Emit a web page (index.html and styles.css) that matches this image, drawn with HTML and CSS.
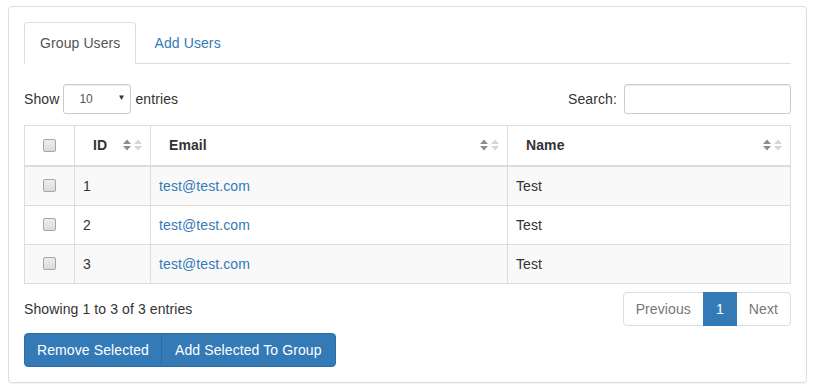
FILE: index.html
```html
<!DOCTYPE html>
<html>
<head>
<meta charset="utf-8">
<link rel="stylesheet" href="styles.css">
</head>
<body>
<div class="panel">
  <ul class="tabs">
    <li class="tab active">Group Users</li>
    <li class="tab">Add Users</li>
  </ul>

  <div class="controls">
    <div class="length">
      <span>Show</span>
      <span class="select-wrap">
        <select class="select"><option>10</option></select>
        <span class="select-arrow">&#9660;</span>
      </span>
      <span>entries</span>
    </div>
    <div class="search">
      <span>Search:</span>
      <input class="search-input" type="text">
    </div>
  </div>

  <table class="grid">
    <colgroup>
      <col class="c-check"><col class="c-id"><col class="c-email"><col class="c-name">
    </colgroup>
    <thead>
      <tr>
        <th class="th-check"><input type="checkbox" class="cb"></th>
        <th><div class="th-inner"><span>ID</span><span class="sort"><svg width="19" height="12" viewBox="0 0 19 12"><path d="M0 5 L4 0.5 L8 5 Z M0 7 L4 11.5 L8 7 Z" fill="#8f8f8f"/><path d="M11 5 L15 0.5 L19 5 Z M11 7 L15 11.5 L19 7 Z" fill="#d6d6d6"/></svg></span></div></th>
        <th><div class="th-inner"><span>Email</span><span class="sort"><svg width="19" height="12" viewBox="0 0 19 12"><path d="M0 5 L4 0.5 L8 5 Z M0 7 L4 11.5 L8 7 Z" fill="#8f8f8f"/><path d="M11 5 L15 0.5 L19 5 Z M11 7 L15 11.5 L19 7 Z" fill="#d6d6d6"/></svg></span></div></th>
        <th><div class="th-inner"><span>Name</span><span class="sort"><svg width="19" height="12" viewBox="0 0 19 12"><path d="M0 5 L4 0.5 L8 5 Z M0 7 L4 11.5 L8 7 Z" fill="#8f8f8f"/><path d="M11 5 L15 0.5 L19 5 Z M11 7 L15 11.5 L19 7 Z" fill="#d6d6d6"/></svg></span></div></th>
      </tr>
    </thead>
    <tbody>
      <tr class="odd">
        <td class="td-check"><input type="checkbox" class="cb"></td>
        <td>1</td>
        <td><a class="link">test@test.com</a></td>
        <td>Test</td>
      </tr>
      <tr>
        <td class="td-check"><input type="checkbox" class="cb"></td>
        <td>2</td>
        <td><a class="link">test@test.com</a></td>
        <td>Test</td>
      </tr>
      <tr class="odd">
        <td class="td-check"><input type="checkbox" class="cb"></td>
        <td>3</td>
        <td><a class="link">test@test.com</a></td>
        <td>Test</td>
      </tr>
    </tbody>
  </table>

  <div class="footer">
    <div class="info">Showing 1 to 3 of 3 entries</div>
    <ul class="pagination">
      <li class="page disabled first">Previous</li>
      <li class="page current">1</li>
      <li class="page disabled last">Next</li>
    </ul>
  </div>

  <div class="btn-group">
    <button class="btn btn-left">Remove Selected</button>
    <button class="btn btn-right">Add Selected To Group</button>
  </div>
</div>
</body>
</html>
```

FILE: styles.css
```css
* { box-sizing: border-box; }

body {
  margin: 0;
  padding: 6px 8px;
  font-family: "Liberation Sans", Arial, Helvetica, sans-serif;
  font-size: 14px;
  line-height: 20px;
  letter-spacing: 0.1px;
  color: #333;
  background: #fff;
}

.panel {
  width: 799px;
  border: 1px solid #ddd;
  border-radius: 4px;
  padding: 15px;
  box-shadow: 0 1px 1px rgba(0, 0, 0, 0.05);
}

.tabs {
  list-style: none;
  margin: 0;
  padding: 0;
  display: flex;
  border-bottom: 1px solid #ddd;
}

.tab {
  padding: 10px 15px;
  margin-right: 2px;
  margin-bottom: -1px;
  border: 1px solid transparent;
  border-radius: 4px 4px 0 0;
  color: #337ab7;
}

.tab.active {
  color: #555;
  background: #fff;
  border-color: #ddd #ddd transparent #ddd;
}

.controls {
  margin-top: 20px;
  display: flex;
  justify-content: space-between;
  align-items: center;
  height: 30px;
}

.length {
  display: flex;
  align-items: center;
  gap: 4px;
}

.select-wrap {
  position: relative;
  display: inline-block;
  width: 68px;
  height: 30px;
}

.select {
  appearance: none;
  -webkit-appearance: none;
  width: 68px;
  height: 30px;
  border: 1px solid #ccc;
  border-radius: 3px;
  background: #fff;
  padding: 0 0 0 15px;
  font-family: "Liberation Sans", Arial, sans-serif;
  font-size: 12px;
  color: #555;
  box-shadow: inset 0 1px 1px rgba(0, 0, 0, 0.075);
}

.select-arrow {
  position: absolute;
  right: 6px;
  top: 8px;
  font-size: 8px;
  line-height: 12px;
  color: #333;
  pointer-events: none;
}

.search {
  display: flex;
  align-items: center;
  gap: 7px;
}

.search-input {
  width: 167px;
  height: 30px;
  border: 1px solid #ccc;
  border-radius: 3px;
  box-shadow: inset 0 1px 1px rgba(0, 0, 0, 0.075);
  padding: 5px 10px;
  font-size: 12px;
}

.grid {
  margin-top: 11px;
  width: 766px;
  table-layout: fixed;
  border-collapse: collapse;
  border: 1px solid #ddd;
}

.c-check { width: 50px; }
.c-id { width: 76px; }
.c-email { width: 357px; }
.c-name { width: 283px; }

.grid th {
  border: 1px solid #ddd;
  border-bottom: 2px solid #ddd;
  padding: 9px 8px 9px 18px;
  text-align: left;
  font-weight: bold;
  height: 40px;
}

.grid th.th-check,
.grid td.td-check {
  padding: 0;
  text-align: center;
}

.th-inner {
  display: flex;
  justify-content: space-between;
  align-items: center;
}

.sort {
  display: flex;
  align-items: center;
}

.sort svg { display: block; }

.grid td {
  border: 1px solid #ddd;
  padding: 9px 8px;
  height: 39px;
}

.grid tr.odd td { background: #f9f9f9; }

.cb {
  appearance: none;
  -webkit-appearance: none;
  width: 13px;
  height: 13px;
  margin: 0;
  vertical-align: middle;
  border: 1px solid #a6a6a6;
  border-radius: 2px;
  background: linear-gradient(#ededed, #dcdcdc);
  display: inline-block;
  position: relative;
  top: -1px;
}

.link {
  color: #337ab7;
  text-decoration: none;
}

.footer {
  margin-top: 8px;
  display: flex;
  justify-content: space-between;
  align-items: center;
}

.pagination {
  list-style: none;
  margin: 0;
  padding: 0;
  display: flex;
}

.page {
  padding: 6px 12px;
  border: 1px solid #ddd;
  margin-left: -1px;
  color: #777;
  background: #fff;
}

.page.first {
  margin-left: 0;
  border-radius: 4px 0 0 4px;
}

.page.last { border-radius: 0 4px 4px 0; }

.page.current {
  background: #337ab7;
  border-color: #337ab7;
  color: #fff;
  position: relative;
}

.btn-group {
  margin-top: 7px;
  display: flex;
}

.btn {
  font-family: "Liberation Sans", Arial, sans-serif;
  font-size: 14px;
  line-height: 20px;
  letter-spacing: 0.1px;
  padding: 6px 12px;
  color: #fff;
  background: #337ab7;
  border: 1px solid #2e6da4;
  margin: 0;
}

.btn-left { border-radius: 4px 0 0 4px; }
.btn-right {
  border-radius: 0 4px 4px 0;
  margin-left: -1px;
  padding: 6px 13px;
}
```
